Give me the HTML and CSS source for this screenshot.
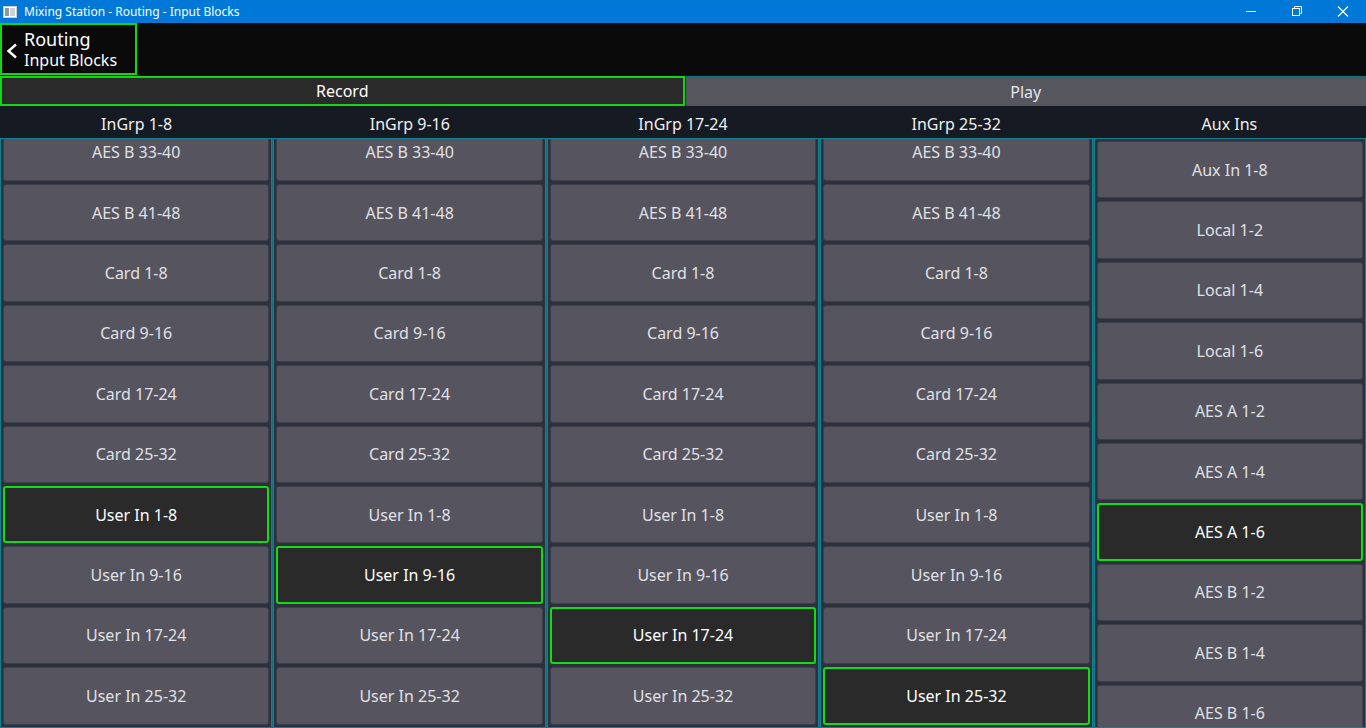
FILE: index.html
```
<!DOCTYPE html>
<html>
<head>
<meta charset="utf-8">
<link rel="stylesheet" href="styles.css">
</head>
<body>
<div class="titlebar">
  <svg class="appicon" width="14" height="12" viewBox="0 0 14 12"><rect x="0.5" y="0.5" width="13" height="11" fill="#ffffff" stroke="#d0d0d0"/><rect x="2" y="2" width="4" height="8" fill="#8a9aa0"/><rect x="7" y="2" width="5" height="8" fill="#c9d3d6"/></svg>
  <span class="title">Mixing Station - Routing - Input Blocks</span>
  <div class="winctl">
    <svg width="46" height="23" viewBox="0 0 46 23"><line x1="18" y1="11.5" x2="28" y2="11.5" stroke="#fff" stroke-width="1"/></svg>
    <svg width="46" height="23" viewBox="0 0 46 23"><rect x="18.5" y="8.5" width="7" height="7" fill="none" stroke="#fff"/><path d="M20.5 8.5 V6.5 H27.5 V13.5 H25.5" fill="none" stroke="#fff"/></svg>
    <svg width="46" height="23" viewBox="0 0 46 23"><path d="M18 6.5 L28 16.5 M28 6.5 L18 16.5" stroke="#fff" stroke-width="1.1"/></svg>
  </div>
</div>
<div class="header">
  <div class="back">
    <svg class="chev" width="13" height="18" viewBox="0 0 13 18"><path d="M11 2.5 L3.5 9 L11 15.5" fill="none" stroke="#fff" stroke-width="2.4"/></svg>
    <div class="backtext">
      <div class="t1">Routing</div>
      <div class="t2">Input Blocks</div>
    </div>
  </div>
</div>
<div class="tabs">
  <div class="tab active">Record</div>
  <div class="tab inactive">Play</div>
</div>
<div class="colheads">
  <div class="ch">InGrp 1-8</div>
  <div class="ch">InGrp 9-16</div>
  <div class="ch">InGrp 17-24</div>
  <div class="ch">InGrp 25-32</div>
  <div class="ch">Aux Ins</div>
</div>
<div class="cols">
  <div class="col"><div class="list scrolled">
    <div class="btn">AES B 33-40</div><div class="btn">AES B 41-48</div><div class="btn">Card 1-8</div><div class="btn">Card 9-16</div><div class="btn">Card 17-24</div><div class="btn">Card 25-32</div><div class="btn sel">User In 1-8</div><div class="btn">User In 9-16</div><div class="btn">User In 17-24</div><div class="btn">User In 25-32</div>
  </div></div>
  <div class="col"><div class="list scrolled">
    <div class="btn">AES B 33-40</div><div class="btn">AES B 41-48</div><div class="btn">Card 1-8</div><div class="btn">Card 9-16</div><div class="btn">Card 17-24</div><div class="btn">Card 25-32</div><div class="btn">User In 1-8</div><div class="btn sel">User In 9-16</div><div class="btn">User In 17-24</div><div class="btn">User In 25-32</div>
  </div></div>
  <div class="col"><div class="list scrolled">
    <div class="btn">AES B 33-40</div><div class="btn">AES B 41-48</div><div class="btn">Card 1-8</div><div class="btn">Card 9-16</div><div class="btn">Card 17-24</div><div class="btn">Card 25-32</div><div class="btn">User In 1-8</div><div class="btn">User In 9-16</div><div class="btn sel">User In 17-24</div><div class="btn">User In 25-32</div>
  </div></div>
  <div class="col"><div class="list scrolled">
    <div class="btn">AES B 33-40</div><div class="btn">AES B 41-48</div><div class="btn">Card 1-8</div><div class="btn">Card 9-16</div><div class="btn">Card 17-24</div><div class="btn">Card 25-32</div><div class="btn">User In 1-8</div><div class="btn">User In 9-16</div><div class="btn">User In 17-24</div><div class="btn sel">User In 25-32</div>
  </div></div>
  <div class="col"><div class="list">
    <div class="btn">Aux In 1-8</div><div class="btn">Local 1-2</div><div class="btn">Local 1-4</div><div class="btn">Local 1-6</div><div class="btn">AES A 1-2</div><div class="btn">AES A 1-4</div><div class="btn sel">AES A 1-6</div><div class="btn">AES B 1-2</div><div class="btn">AES B 1-4</div><div class="btn">AES B 1-6</div>
  </div></div>
</div>
</body>
</html>
```
FILE: styles.css
```
* { box-sizing: border-box; }
html, body { margin: 0; padding: 0; }
body {
  width: 1366px;
  height: 728px;
  overflow: hidden;
  background: #161a22;
  font-family: "Noto Sans", "Open Sans", sans-serif;
  color: #e6e6e6;
  display: flex;
  flex-direction: column;
}
.titlebar {
  height: 23px;
  background: #0078d7;
  display: flex;
  align-items: center;
  color: #fff;
  font-size: 12px;
  flex: none;
}
.appicon { margin-left: 3px; margin-right: 7px; }
.title { flex: 1; line-height: 23px; }
.winctl { display: flex; }
.winctl svg { display: block; }
.header {
  height: 52px;
  background: #0a0a0a;
  flex: none;
  display: flex;
}
.back {
  width: 137px;
  height: 52px;
  border: 2px solid #16d416;
  display: flex;
  align-items: center;
  padding-left: 3px;
}
.chev { margin-right: 6px; margin-top: 3px; }
.backtext { color: #fff; }
.t1 { font-size: 18px; line-height: 22px; }
.t2 { font-size: 16px; line-height: 21px; }
.tabs {
  height: 31px;
  flex: none;
  display: flex;
  gap: 1px;
  padding-top: 1px;
  background: #111318;
}
.tab {
  flex: 1;
  display: flex;
  align-items: center;
  justify-content: center;
  font-size: 16px;
}
.tab.active {
  background: #2a2a2a;
  border: 2px solid #16d416;
  color: #fff;
}
.tab.inactive {
  background: #56565f;
  border-top: 2px solid #0f6f7c;
  color: #e6e6e6;
}
.colheads {
  height: 32px;
  flex: none;
  display: flex;
  background: #161a22;
}
.ch {
  flex: 1;
  text-align: center;
  font-size: 16px;
  line-height: 32px;
  color: #f0f0f0;
  padding-top: 2px;
}
.cols {
  flex: 1;
  display: flex;
  min-height: 0;
  gap: 1px;
  background: #0f6f7c;
}
.col {
  flex: 1;
  border: 1px solid #12808f;
  background: #2c313d;
  overflow: hidden;
  padding: 2px 2px 0 2px;
}
.list {
  display: flex;
  flex-direction: column;
  gap: 3px;
}
.list.scrolled { margin-top: -17.4px; }
.btn {
  height: 57.4px;
  flex: none;
  background: #56555f;
  border: 1px solid #3d404b;
  border-radius: 3px;
  display: flex;
  align-items: center;
  justify-content: center;
  font-size: 16px;
  color: #e0e0e4;
}
.btn.sel {
  background: #2a2a2a;
  border: 2px solid #12dc12;
  color: #fff;
}
```
